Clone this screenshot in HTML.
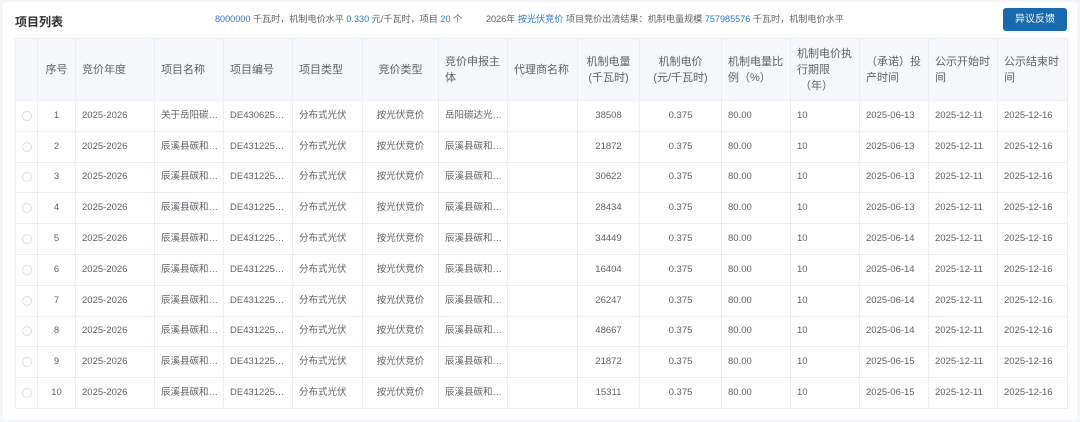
<!DOCTYPE html>
<html><head><meta charset="utf-8"><style>
*{margin:0;padding:0;box-sizing:border-box}
body{width:1080px;height:422px;background:#f3f5f8;font-family:"Liberation Sans","Noto Sans CJK SC",sans-serif;color:#606266;overflow:hidden;position:relative}
.card{position:absolute;left:3px;top:2px;width:1074px;height:418px;background:#fff;border-radius:3px}
.title{position:absolute;left:15px;top:13px;font-size:12px;font-weight:bold;color:#303133}
.sum{position:absolute;top:13px;font-size:9.1px;line-height:12px;color:#606266;white-space:nowrap}
.sum b{font-weight:normal;color:#2f78c4}
.btn{position:absolute;left:1003px;top:8px;width:64px;height:23px;background:#1769b0;border-radius:3px;color:#fff;font-size:10px;text-align:center;line-height:23px}
table{position:absolute;left:15px;top:38px;border-collapse:collapse;table-layout:fixed;width:1052px}
th,td{border:1px solid #ebeef5;font-size:9.5px;padding:0 6px;white-space:nowrap;overflow:hidden;vertical-align:middle;text-align:left}
th{background:#f5f7fa;height:62px;font-weight:normal;font-size:11px;color:#606266;white-space:normal;line-height:16px}
td{height:30.8px;line-height:14px;color:#606266}
.c{text-align:center}
.r{display:block;width:10px;height:10px;border:1px solid #dcdfe6;border-radius:50%}
</style></head><body>
<div class="card"></div>
<div class="title">项目列表</div>
<div class="sum" style="left:215px"><b>8000000</b> 千瓦时，机制电价水平 <b>0.330</b> 元/千瓦时，项目 <b>20</b> 个</div>
<div class="sum" style="left:486px">2026年 <b>按光伏竞价</b> 项目竞价出清结果：机制电量规模 <b>757985576</b> 千瓦时，机制电价水平</div>
<div class="btn">异议反馈</div>
<table>
<colgroup><col style="width:22px"><col style="width:38px"><col style="width:79px"><col style="width:69px"><col style="width:69px"><col style="width:70px"><col style="width:76px"><col style="width:69px"><col style="width:70px"><col style="width:62px"><col style="width:82px"><col style="width:69px"><col style="width:69px"><col style="width:69px"><col style="width:69px"><col style="width:70px"></colgroup>
<tr><th></th><th class="c">序号</th><th>竞价年度</th><th>项目名称</th><th>项目编号</th><th>项目类型</th><th class="c">竞价类型</th><th>竞价申报主体</th><th>代理商名称</th><th class="c">机制电量<br>(千瓦时)</th><th class="c">机制电价<br>(元/千瓦时)</th><th>机制电量比<br>例（%）</th><th>机制电价执<br>行期限<br>&nbsp;（年）</th><th>（承诺）投<br>产时间</th><th>公示开始时<br>间</th><th>公示结束时<br>间</th></tr>
<tr><td><span class="r"></span></td><td class="c">1</td><td>2025-2026</td><td>关于岳阳碳…</td><td>DE430625…</td><td>分布式光伏</td><td class="c">按光伏竞价</td><td>岳阳碳达光…</td><td></td><td class="c">38508</td><td class="c">0.375</td><td>80.00</td><td>10</td><td>2025-06-13</td><td>2025-12-11</td><td>2025-12-16</td></tr>
<tr><td><span class="r"></span></td><td class="c">2</td><td>2025-2026</td><td>辰溪县碳和…</td><td>DE431225…</td><td>分布式光伏</td><td class="c">按光伏竞价</td><td>辰溪县碳和…</td><td></td><td class="c">21872</td><td class="c">0.375</td><td>80.00</td><td>10</td><td>2025-06-13</td><td>2025-12-11</td><td>2025-12-16</td></tr>
<tr><td><span class="r"></span></td><td class="c">3</td><td>2025-2026</td><td>辰溪县碳和…</td><td>DE431225…</td><td>分布式光伏</td><td class="c">按光伏竞价</td><td>辰溪县碳和…</td><td></td><td class="c">30622</td><td class="c">0.375</td><td>80.00</td><td>10</td><td>2025-06-13</td><td>2025-12-11</td><td>2025-12-16</td></tr>
<tr><td><span class="r"></span></td><td class="c">4</td><td>2025-2026</td><td>辰溪县碳和…</td><td>DE431225…</td><td>分布式光伏</td><td class="c">按光伏竞价</td><td>辰溪县碳和…</td><td></td><td class="c">28434</td><td class="c">0.375</td><td>80.00</td><td>10</td><td>2025-06-13</td><td>2025-12-11</td><td>2025-12-16</td></tr>
<tr><td><span class="r"></span></td><td class="c">5</td><td>2025-2026</td><td>辰溪县碳和…</td><td>DE431225…</td><td>分布式光伏</td><td class="c">按光伏竞价</td><td>辰溪县碳和…</td><td></td><td class="c">34449</td><td class="c">0.375</td><td>80.00</td><td>10</td><td>2025-06-14</td><td>2025-12-11</td><td>2025-12-16</td></tr>
<tr><td><span class="r"></span></td><td class="c">6</td><td>2025-2026</td><td>辰溪县碳和…</td><td>DE431225…</td><td>分布式光伏</td><td class="c">按光伏竞价</td><td>辰溪县碳和…</td><td></td><td class="c">16404</td><td class="c">0.375</td><td>80.00</td><td>10</td><td>2025-06-14</td><td>2025-12-11</td><td>2025-12-16</td></tr>
<tr><td><span class="r"></span></td><td class="c">7</td><td>2025-2026</td><td>辰溪县碳和…</td><td>DE431225…</td><td>分布式光伏</td><td class="c">按光伏竞价</td><td>辰溪县碳和…</td><td></td><td class="c">26247</td><td class="c">0.375</td><td>80.00</td><td>10</td><td>2025-06-14</td><td>2025-12-11</td><td>2025-12-16</td></tr>
<tr><td><span class="r"></span></td><td class="c">8</td><td>2025-2026</td><td>辰溪县碳和…</td><td>DE431225…</td><td>分布式光伏</td><td class="c">按光伏竞价</td><td>辰溪县碳和…</td><td></td><td class="c">48667</td><td class="c">0.375</td><td>80.00</td><td>10</td><td>2025-06-14</td><td>2025-12-11</td><td>2025-12-16</td></tr>
<tr><td><span class="r"></span></td><td class="c">9</td><td>2025-2026</td><td>辰溪县碳和…</td><td>DE431225…</td><td>分布式光伏</td><td class="c">按光伏竞价</td><td>辰溪县碳和…</td><td></td><td class="c">21872</td><td class="c">0.375</td><td>80.00</td><td>10</td><td>2025-06-15</td><td>2025-12-11</td><td>2025-12-16</td></tr>
<tr><td><span class="r"></span></td><td class="c">10</td><td>2025-2026</td><td>辰溪县碳和…</td><td>DE431225…</td><td>分布式光伏</td><td class="c">按光伏竞价</td><td>辰溪县碳和…</td><td></td><td class="c">15311</td><td class="c">0.375</td><td>80.00</td><td>10</td><td>2025-06-15</td><td>2025-12-11</td><td>2025-12-16</td></tr>
</table>
</body></html>
